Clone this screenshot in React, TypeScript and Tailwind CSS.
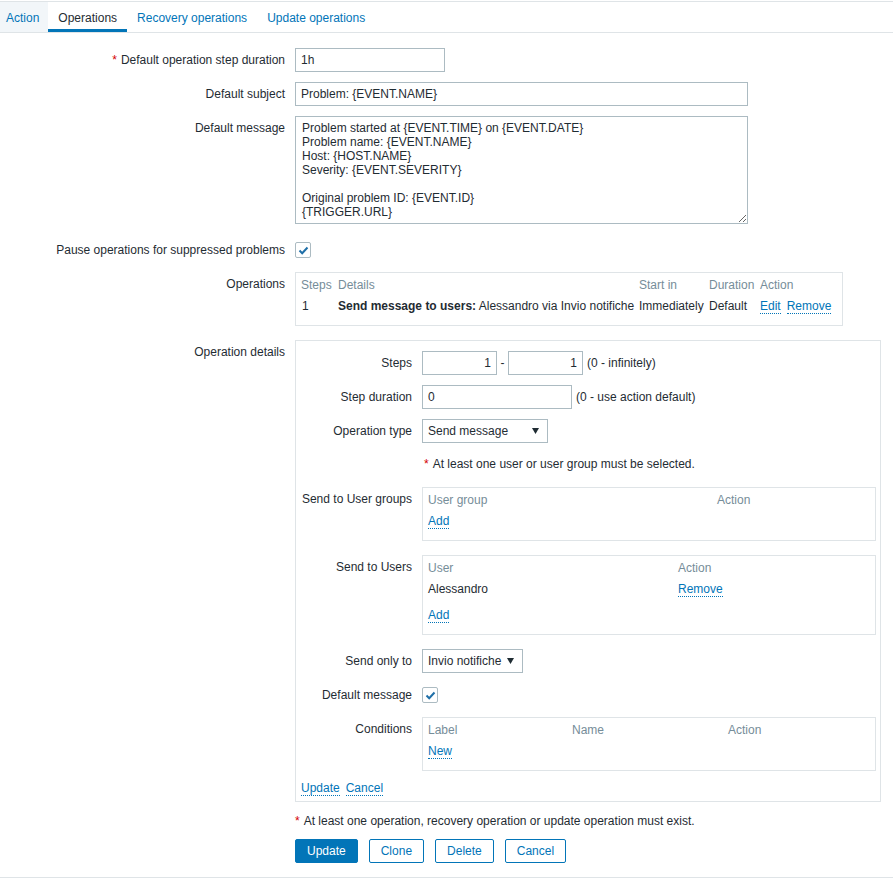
import React from "react";

const LINK = "text-[#0275b8] border-b border-dotted border-[#0275b8]";

function Req() {
  return <span className="text-[#d40000] mr-[4px]">*</span>;
}

function Link({ children }: { children: React.ReactNode }) {
  return <span className={LINK}>{children}</span>;
}

function Check() {
  return (
    <div className="w-[16px] h-[16px] border border-[#acbbc2] rounded-[2px] bg-white flex items-center justify-center">
      <svg width="11" height="9" viewBox="0 0 11 9" fill="none">
        <path d="M1.5 4.5 L4.2 7.2 L9.5 1.5" stroke="#1f6fa8" strokeWidth="2" />
      </svg>
    </div>
  );
}

function Arrow() {
  return (
    <svg width="7" height="6" viewBox="0 0 7 6">
      <path d="M0 0 H7 L3.5 6 Z" fill="#1f2c33" />
    </svg>
  );
}

function Select({ value, w }: { value: string; w: string }) {
  return (
    <div className={`${w} h-[24px] border border-[#acbbc2] bg-white flex items-center justify-between pl-[5px] pr-[8px]`}>
      <span>{value}</span>
      <Arrow />
    </div>
  );
}

function Input({ value, w, right }: { value: string; w: string; right?: boolean }) {
  return (
    <div className={`${w} h-[24px] border border-[#acbbc2] bg-white flex items-center px-[5px] ${right ? "justify-end" : ""}`}>
      {value}
    </div>
  );
}

function Row({ label, req, children, className = "" }: { label: string; req?: boolean; children: React.ReactNode; className?: string }) {
  return (
    <div className={`flex ${className}`}>
      <div className="w-[295px] shrink-0 pr-[10px] text-right pt-[5px]">
        {req && <Req />}
        {label}
      </div>
      <div className="flex-1 min-w-0">{children}</div>
    </div>
  );
}

function SubRow({ label, children, className = "" }: { label: string; children: React.ReactNode; className?: string }) {
  return (
    <div className={`flex ${className}`}>
      <div className="w-[121px] shrink-0 pr-[10px] text-right pt-[5px]">{label}</div>
      <div className="flex-1 min-w-0">{children}</div>
    </div>
  );
}

function Box({ children, w }: { children: React.ReactNode; w: string }) {
  return <div className={`${w} border border-[#dfe4e7] pt-[2px] pb-[8px] px-[5px]`}>{children}</div>;
}

const tabs = ["Action", "Operations", "Recovery operations", "Update operations"];

export default function App() {
  return (
    <div className="w-[893px] h-[878px] bg-white text-[12px] leading-[14px] text-[#1f2c33] font-['Liberation_Sans',Arial,sans-serif]">
      <div className="mt-px border-y border-[#dfe4e7]">
        {/* tab strip */}
        <div className="flex h-[31px] border-b border-[#dfe4e7]">
          {tabs.map((t, i) => {
            const active = i === 1;
            const first = i === 0;
            return (
              <div
                key={t}
                className={`h-[30px] pt-[9px] ${first ? "pl-[6px] pr-[9px] bg-[#f2f6f9]" : "px-[10px]"} ${
                  active ? "text-[#1f2c33] border-b-[3px] border-[#0275b8]" : "text-[#0275b8]"
                }`}
              >
                {t}
              </div>
            );
          })}
        </div>

        {/* action operations form */}
        <div className="pt-[15px] pb-[14px] flex flex-col">
          <Row label="Default operation step duration" req>
            <Input value="1h" w="w-[150px]" />
          </Row>
          <Row label="Default subject" className="mt-[10px]">
            <Input value="Problem: {EVENT.NAME}" w="w-[453px]" />
          </Row>
          <Row label="Default message" className="mt-[10px]">
            <textarea
              readOnly
              className="block w-[453px] h-[108px] border border-[#acbbc2] px-[6px] pt-[4px] resize-y outline-none text-[12px] leading-[14px] text-[#1f2c33] font-['Liberation_Sans',Arial,sans-serif]"
              value={
                "Problem started at {EVENT.TIME} on {EVENT.DATE}\nProblem name: {EVENT.NAME}\nHost: {HOST.NAME}\nSeverity: {EVENT.SEVERITY}\n\nOriginal problem ID: {EVENT.ID}\n{TRIGGER.URL}"
              }
            />
          </Row>
          <Row label="Pause operations for suppressed problems" className="mt-[14px]">
            <div className="h-[24px] flex items-center">
              <Check />
            </div>
          </Row>

          <Row label="Operations" className="mt-[10px]">
            <div className="w-[548px] border border-[#dfe4e7] pt-[2px] pb-[8px] pl-[5px] pr-[10px]">
              <div className="flex h-[20px] items-center text-[#768d99]">
                <div className="w-[37px]">Steps</div>
                <div className="w-[301px]">Details</div>
                <div className="w-[70px]">Start in</div>
                <div className="w-[51px]">Duration</div>
                <div>Action</div>
              </div>
              <div className="flex h-[22px] items-center">
                <div className="w-[37px] pl-px">1</div>
                <div className="w-[301px] whitespace-nowrap">
                  <b>Send message to users:</b> Alessandro via Invio notifiche
                </div>
                <div className="w-[70px]">Immediately</div>
                <div className="w-[51px]">Default</div>
                <div className="flex gap-[6px]">
                  <Link>Edit</Link>
                  <Link>Remove</Link>
                </div>
              </div>
            </div>
          </Row>

          <Row label="Operation details" className="mt-[14px]">
            <div className="w-[586px] border border-[#dfe4e7] pt-[10px] pb-[5px] px-[5px] flex flex-col">
              <SubRow label="Steps">
                <div className="flex items-center">
                  <Input value="1" w="w-[75px]" right />
                  <span className="w-[11px] text-center">-</span>
                  <Input value="1" w="w-[75px]" right />
                  <span className="ml-[4px]">(0 - infinitely)</span>
                </div>
              </SubRow>
              <SubRow label="Step duration" className="mt-[10px]">
                <div className="flex items-center">
                  <Input value="0" w="w-[150px]" />
                  <span className="ml-[4px]">(0 - use action default)</span>
                </div>
              </SubRow>
              <SubRow label="Operation type" className="mt-[10px]">
                <Select value="Send message" w="w-[126px]" />
              </SubRow>
              <SubRow label="" className="mt-[10px]">
                <div className="pt-[4px] pb-[6px] pl-[2px]">
                  <Req />
                  At least one user or user group must be selected.
                </div>
              </SubRow>

              <SubRow label="Send to User groups" className="mt-[10px]">
                <Box w="w-[454px]">
                  <div className="flex h-[20px] items-center text-[#768d99]">
                    <div className="w-[289px]">User group</div>
                    <div>Action</div>
                  </div>
                  <div className="flex h-[22px] items-center">
                    <Link>Add</Link>
                  </div>
                </Box>
              </SubRow>

              <SubRow label="Send to Users" className="mt-[14px]">
                <Box w="w-[454px]">
                  <div className="flex h-[20px] items-center text-[#768d99]">
                    <div className="w-[250px]">User</div>
                    <div>Action</div>
                  </div>
                  <div className="flex h-[22px] items-center">
                    <div className="w-[250px]">Alessandro</div>
                    <Link>Remove</Link>
                  </div>
                  <div className="flex h-[22px] mt-[4px] items-center">
                    <Link>Add</Link>
                  </div>
                </Box>
              </SubRow>

              <SubRow label="Send only to" className="mt-[14px]">
                <Select value="Invio notifiche" w="w-[101px]" />
              </SubRow>
              <SubRow label="Default message" className="mt-[10px]">
                <div className="h-[24px] flex items-center">
                  <Check />
                </div>
              </SubRow>

              <SubRow label="Conditions" className="mt-[10px]">
                <Box w="w-[454px]">
                  <div className="flex h-[20px] items-center text-[#768d99]">
                    <div className="w-[144px]">Label</div>
                    <div className="w-[156px]">Name</div>
                    <div>Action</div>
                  </div>
                  <div className="flex h-[22px] items-center">
                    <Link>New</Link>
                  </div>
                </Box>
              </SubRow>

              <div className="mt-[10px] flex gap-[6px]">
                <Link>Update</Link>
                <Link>Cancel</Link>
              </div>
            </div>
          </Row>

          <div className="ml-[295px] mt-[12px]">
            <Req />
            At least one operation, recovery operation or update operation must exist.
          </div>

          <div className="ml-[295px] mt-[11px] flex gap-[11px]">
            <button className="h-[24px] px-[11px] rounded-[2px] bg-[#0275b8] border border-[#0275b8] text-white">Update</button>
            <button className="h-[24px] px-[11px] rounded-[2px] bg-white border border-[#0275b8] text-[#0275b8]">Clone</button>
            <button className="h-[24px] px-[11px] rounded-[2px] bg-white border border-[#0275b8] text-[#0275b8]">Delete</button>
            <button className="h-[24px] px-[11px] rounded-[2px] bg-white border border-[#0275b8] text-[#0275b8]">Cancel</button>
          </div>
        </div>
      </div>
    </div>
  );
}
